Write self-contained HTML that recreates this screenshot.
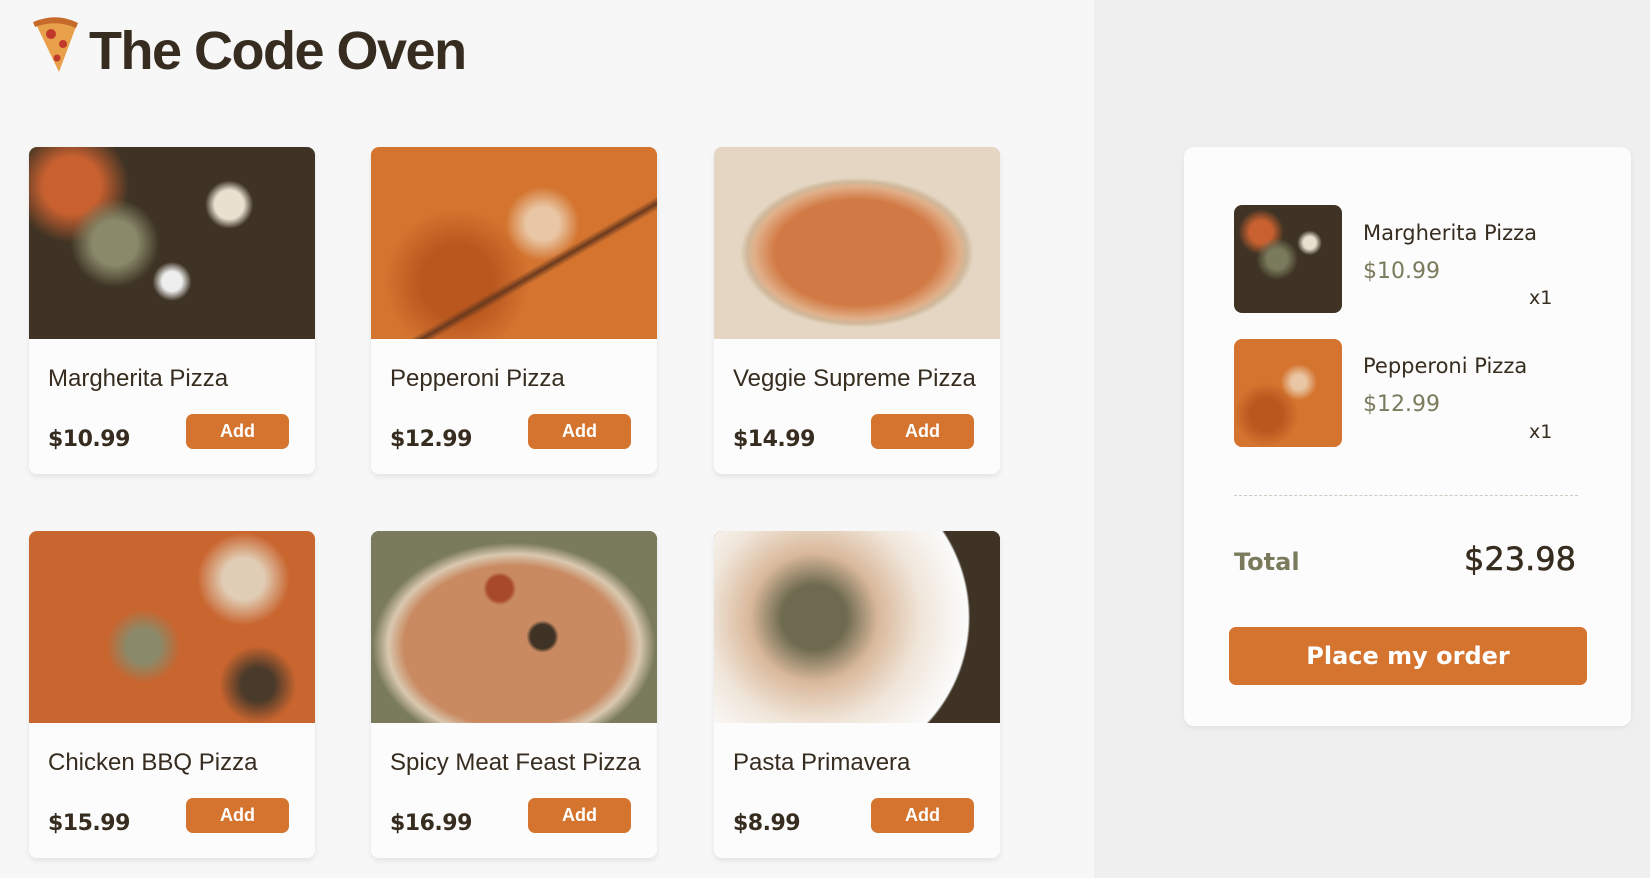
<!DOCTYPE html>
<html><head><meta charset="utf-8"><style>
*{box-sizing:border-box;margin:0;padding:0}
body{width:1650px;height:878px;overflow:hidden;font-family:"Liberation Sans",sans-serif;color:#362c1f;background:#efefef;position:relative}
.left{position:absolute;left:0;top:0;width:1094px;height:878px;background:#f7f7f7}
h1{position:absolute;left:89px;top:20px;font-size:54px;font-weight:bold;letter-spacing:-1.5px;color:#362c1f}
.emoji{position:absolute;left:29px;top:16px;width:50px;height:58px}
.card{position:absolute;width:286px;background:#fcfcfc;border-radius:8px;box-shadow:0 3px 6px rgba(0,0,0,.08);overflow:hidden}
.img{height:192px}
.name{position:absolute;left:19px;top:218px;font-size:24px;color:#362c1f}
.price{position:absolute;left:19px;top:280px;font-size:22px;font-weight:bold;font-family:"DejaVu Sans",sans-serif;color:#362c1f;letter-spacing:-.5px}
.add{position:absolute;left:157px;top:267px;width:103px;height:35px;background:#d4742f;border-radius:7px;color:#fff;font-size:18px;font-weight:bold;text-align:center;line-height:35px}
.cart{position:absolute;left:1184px;top:147px;width:447px;height:579px;background:#fcfcfc;border-radius:10px;box-shadow:0 2px 6px rgba(0,0,0,.06)}
.thumb{position:absolute;left:50px;width:108px;height:108px;border-radius:8px}
.cn{position:absolute;left:179px;font-size:21px;font-family:"DejaVu Sans",sans-serif;color:#362c1f}
.cp{position:absolute;left:179px;font-size:22px;font-family:"DejaVu Sans",sans-serif;color:#7a7a5c}
.cq{position:absolute;left:345px;font-size:19px;font-family:"DejaVu Sans",sans-serif}
</style></head><body>
<div class="left"></div>
<svg class="emoji" viewBox="0 0 50 58"><path d="M6 6 Q28 -2 48 8 L30 56 Z" fill="#e8a04a"/><path d="M4 6 Q28 -4 49 7 L47 12 Q27 3 6 11 Z" fill="#c56a2a"/><circle cx="22" cy="18" r="5" fill="#c0392b"/><circle cx="34" cy="28" r="4" fill="#c0392b"/><circle cx="28" cy="42" r="3.5" fill="#c0392b"/></svg>
<h1>The Code Oven</h1>

<div class="card" style="left:29px;top:147px;height:327px"><div class="img" style="background:radial-gradient(circle at 30% 50%,#8a8a6a 0 10%,transparent 20%),radial-gradient(circle at 70% 30%,#e9e0d0 0 6%,transparent 10%),radial-gradient(circle at 50% 70%,#eee 0 5%,transparent 10%),radial-gradient(circle at 15% 20%,#c86030 0 10%,transparent 20%),#3e3324"></div><div class="name">Margherita Pizza</div><div class="price">$10.99</div><div class="add">Add</div></div>
<div class="card" style="left:371px;top:147px;height:327px"><div class="img" style="background:linear-gradient(150deg,transparent 60%,#6b3a1e 62%,transparent 64%),radial-gradient(circle at 60% 40%,#e9c6a4 0 8%,transparent 18%),radial-gradient(circle at 30% 70%,#b9571f 0 15%,transparent 30%),#d4742f"></div><div class="name">Pepperoni Pizza</div><div class="price">$12.99</div><div class="add">Add</div></div>
<div class="card" style="left:714px;top:147px;height:327px"><div class="img" style="background:radial-gradient(ellipse 48% 46% at 50% 55%,#d27a45 0 60%,#e1b08a 75%,#cfb79a 80%,#e4d6c2 85%),#dccbb5"></div><div class="name">Veggie Supreme Pizza</div><div class="price">$14.99</div><div class="add">Add</div></div>
<div class="card" style="left:29px;top:531px;height:327px"><div class="img" style="background:radial-gradient(circle at 40% 60%,#8a8a6a 0 8%,transparent 18%),radial-gradient(circle at 75% 25%,#e0cdb5 0 8%,transparent 18%),radial-gradient(circle at 80% 80%,#4a3a2a 0 6%,transparent 14%),#c9652f"></div><div class="name">Chicken BBQ Pizza</div><div class="price">$15.99</div><div class="add">Add</div></div>
<div class="card" style="left:371px;top:531px;height:327px"><div class="img" style="background:radial-gradient(circle at 60% 55%,#3e3324 0 6%,transparent 8%),radial-gradient(circle at 45% 30%,#a84a2a 0 6%,transparent 8%),radial-gradient(ellipse 55% 60% at 50% 60%,#c98a62 0 70%,#d9c8b0 80%,#7a7a5c 90%),#3e3324"></div><div class="name">Spicy Meat Feast Pizza</div><div class="price">$16.99</div><div class="add">Add</div></div>
<div class="card" style="left:714px;top:531px;height:327px"><div class="img" style="background:radial-gradient(circle at 35% 45%,#6e6a50 0 15%,#d9b89a 30%,#f0e6da 50%,#fbfbfb 72%,#3e3324 73%),#3e3324"></div><div class="name">Pasta Primavera</div><div class="price">$8.99</div><div class="add">Add</div></div>

<div class="cart">
<div class="thumb" style="top:58px;background:radial-gradient(circle at 40% 50%,#7a7a5c 0 12%,transparent 25%),radial-gradient(circle at 70% 35%,#e9e0d0 0 6%,transparent 12%),radial-gradient(circle at 25% 25%,#c86030 0 10%,transparent 20%),#3e3324"></div>
<div class="cn" style="top:74px">Margherita Pizza</div>
<div class="cp" style="top:112px">$10.99</div>
<div class="cq" style="top:140px">x1</div>
<div class="thumb" style="top:192px;background:radial-gradient(circle at 60% 40%,#e9c6a4 0 8%,transparent 20%),radial-gradient(circle at 30% 70%,#b9571f 0 15%,transparent 30%),#d4742f"></div>
<div class="cn" style="top:207px">Pepperoni Pizza</div>
<div class="cp" style="top:245px">$12.99</div>
<div class="cq" style="top:274px">x1</div>
<div style="position:absolute;left:50px;top:348px;width:344px;border-top:1px dashed #cfc9bf"></div>
<div style="position:absolute;left:50px;top:401px;font-size:24px;font-weight:bold;font-family:'DejaVu Sans',sans-serif;color:#7a7a5c">Total</div>
<div style="position:absolute;right:55px;top:393px;font-size:32px;font-family:'DejaVu Sans',sans-serif;color:#362c1f;-webkit-text-stroke:.6px #362c1f">$23.98</div>
<div style="position:absolute;left:45px;top:480px;width:358px;height:58px;background:#d4742f;border-radius:7px;color:#fff;font-size:24px;font-weight:bold;text-align:center;line-height:58px;font-family:'DejaVu Sans',sans-serif">Place my order</div>
</div>
</body></html>
